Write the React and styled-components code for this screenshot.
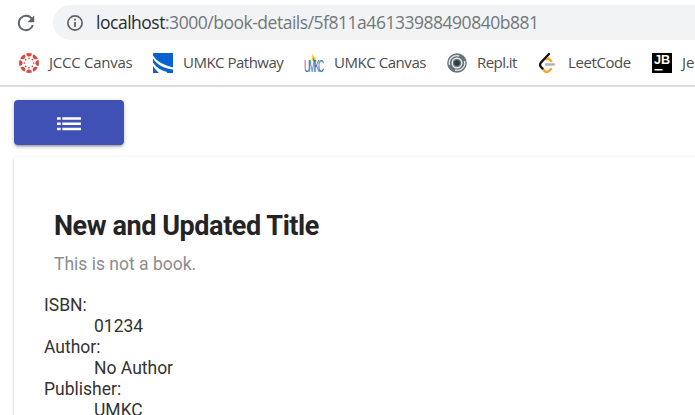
import React from 'react';
import styled, { createGlobalStyle } from 'styled-components';

const GlobalStyle = createGlobalStyle`
  * { box-sizing: border-box; }
  html, body { margin: 0; background: #fff; overflow: hidden; }
`;

const Window = styled.div`
  width: 695px;
  height: 415px;
  overflow: hidden;
  background: #fff;
  font-family: Roboto, sans-serif;
`;

const Toolbar = styled.div`
  display: flex;
  align-items: center;
  height: 45px;
  padding: 0 0 0 15px;
`;

const AddressBar = styled.div`
  flex: 1;
  display: flex;
  align-items: center;
  height: 35px;
  margin-left: 16px;
  padding-left: 13px;
  border-radius: 18px 0 0 18px;
  background: #f1f3f4;
`;

const Url = styled.span`
  margin-left: 12px;
  padding-bottom: 1px;
  font: 17.5px/24px "Open Sans", sans-serif;
  letter-spacing: -0.48px;
  white-space: nowrap;
  color: #73777a;
`;

const Host = styled.span`
  color: #2b2c2f;
`;

const BookmarkBar = styled.nav`
  display: flex;
  align-items: center;
  height: 42px;
  padding: 0 0 5px 19px;
  border-bottom: 2px solid #dcdcdc;
  overflow: hidden;
`;

const Bookmark = styled.div`
  flex: none;
  display: flex;
  align-items: center;
  gap: 10px;
  width: ${(p) => p.$width}px;
  font: 15px/20px "Open Sans", sans-serif;
  letter-spacing: ${(p) => p.$spacing}px;
  white-space: nowrap;
  color: #4a4d50;

  svg { flex: none; }
`;

const BookmarkLabel = styled.span`
  padding-bottom: 2px;
`;

const Page = styled.main`
  padding: 13px 0 0 14px;
`;

const ListButton = styled.button`
  display: flex;
  align-items: center;
  justify-content: center;
  width: 110px;
  height: 45px;
  padding: 3px 0 0;
  border: 0;
  border-radius: 4px;
  background: #3f51b5;
  box-shadow: 0 3px 2px -2px rgba(0, 0, 0, 0.22), 0 2px 3px rgba(0, 0, 0, 0.16), 0 1px 6px rgba(0, 0, 0, 0.12);
`;

const Card = styled.section`
  height: 300px;
  margin-top: 12px;
  padding: 51px 30px 0;
  border-radius: 4px 0 0 4px;
  background: #fff;
  box-shadow: 0 2px 2px -1px rgba(0, 0, 0, 0.2), 0 1px 2px rgba(0, 0, 0, 0.14), 0 1px 4px rgba(0, 0, 0, 0.12);
`;

const Title = styled.h2`
  margin: 0 0 0 10px;
  font-size: 27px;
  line-height: 36px;
  font-weight: 700;
  letter-spacing: -0.43px;
  color: #242424;
`;

const Subtitle = styled.p`
  margin: 9px 0 0 10px;
  font-size: 17.5px;
  line-height: 22px;
  color: #8c8c8c;
`;

const Details = styled.dl`
  margin: 20px 0 0;
  font-size: 17.5px;
  line-height: 21px;
  color: #333;
`;

const Value = styled.dd`
  margin: 0 0 0 50px;
`;

const ReloadIcon = () => (
  <svg width="22" height="22" viewBox="0 0 22 22">
    <path d="M17 7A7.200 7.200 0 1 0 17.900 13" fill="none" stroke="#5f6368" strokeWidth="1.900" />
    <path d="M19.200 3.500v6.800h-6.800z" fill="#5f6368" />
  </svg>
);

const InfoIcon = () => (
  <svg width="18" height="18" viewBox="0 0 18 18">
    <circle cx="9" cy="9" r="7.1" fill="none" stroke="#5f6368" strokeWidth="1.7" />
    <path d="M8.1 4.800h1.800v1.800H8.100zM8.100 8h1.800v5H8.100z" fill="#5f6368" />
  </svg>
);

const spokes = [0, 45, 90, 135, 180, 225, 270, 315];

const CanvasIcon = () => (
  <svg width="20" height="20" viewBox="0 0 20 20" fill="#d64b40">
    {spokes.map((angle) => (
      <g key={angle} transform={`rotate(${angle} 10 10)`}>
        <path d="M7 0.5Q10-.4 13 .5Q12.500 3.600 10 3.600T7 .5z" />
        <circle cx="10" cy="5.300" r="0.850" />
      </g>
    ))}
  </svg>
);

const PathwayIcon = () => (
  <svg width="20" height="20" viewBox="0 0 20 20">
    <path d="M0 0h20v20H0z" fill="#0b62ce" />
    <path d="M0 2.500C4 9 11 12 20 14.500v2C11 15.500 4 12 0 5.500z" fill="#fff" />
    <path d="M0 9.500c3 5 8 7.500 14 9.500v1H6C4 18 2 16 0 13z" fill="#fff" />
  </svg>
);

const UmkcIcon = () => (
  <svg width="20" height="20" viewBox="0 0 20 20">
    <path d="M7.500 7.500L8 1l3.500 4 1.500 4z" fill="#f5cf43" />
    <path d="M9 8.500V4l3 5z" fill="#5792b5" />
    <g transform="scale(0.5 1)">
      <text x="0" y="19" textLength="40" lengthAdjust="spacing" fontFamily="Liberation Sans" fontSize="17" fill="#2871bd">UMKC</text>
    </g>
  </svg>
);

const ReplitIcon = () => (
  <svg width="20" height="20" viewBox="0 0 20 20" fill="none">
    <circle cx="10" cy="10" r="9.800" fill="#66747b" />
    <path d="M2.500 12C1 6 6 1.500 12 3M17.500 8c1.500 6-3.500 10.500-9.500 9" stroke="#e4e8e9" strokeWidth="1.300" />
    <circle cx="10" cy="10" r="4.800" stroke="#e4e8e9" strokeWidth="1.400" />
    <circle cx="10" cy="10" r="2.700" fill="#30383c" />
  </svg>
);

const LeetCodeIcon = () => (
  <svg width="20" height="20" viewBox="0 0 20 20" fill="none" strokeWidth="2.300" strokeLinecap="round">
    <path d="M8 6.300l2-1 3.200 2.700M4 15l2.500 3q2.500 2 4.500 0l2-2" stroke="#f8a51b" />
    <path d="M11 1L3 9.500Q1.200 12 3 14l1.500 1.500" stroke="#111" />
    <path d="M8 11.500h8" stroke="#b3b3b3" />
  </svg>
);

const JetBrainsIcon = () => (
  <svg width="20" height="20" viewBox="0 0 20 20">
    <path d="M0 0h20v20H0z" fill="#000" />
    <text x="2" y="11" textLength="16" lengthAdjust="spacingAndGlyphs" fontFamily="Liberation Sans" fontWeight="700" fontSize="12" fill="#fff">JB</text>
    <path d="M2.500 16h8v1.500h-8z" fill="#fff" />
  </svg>
);

const ListIcon = () => (
  <svg width="24" height="14" viewBox="0 0 24 14" fill="#fff">
    <path d="M0 .3h3.700v2.500H0zM5.300 .3H24v2.500H5.300zM0 5.500h3.700v2.500H0zM5.300 5.500H24v2.500H5.300zM0 10.700h3.700v2.500H0zM5.300 10.700H24v2.500H5.300z" />
  </svg>
);

const bookmarks = [
  { label: 'JCCC Canvas', Icon: CanvasIcon, width: 134, spacing: -0.25 },
  { label: 'UMKC Pathway', Icon: PathwayIcon, width: 151, spacing: -0.5 },
  { label: 'UMKC Canvas', Icon: UmkcIcon, width: 143, spacing: -0.45 },
  { label: 'Repl.it', Icon: ReplitIcon, width: 91, spacing: -0.55 },
  { label: 'LeetCode', Icon: LeetCodeIcon, width: 114, spacing: -0.4 },
  { label: 'Je', Icon: JetBrainsIcon, width: 110, spacing: -0.1 },
];

const details = [
  ['ISBN:', '01234'],
  ['Author:', 'No Author'],
  ['Publisher:', 'UMKC'],
];

export default function App() {
  return (
    <Window>
      <GlobalStyle />
      <Toolbar>
        <ReloadIcon />
        <AddressBar>
          <InfoIcon />
          <Url><Host>localhost</Host>:3000/book-details/5f811a46133988490840b881</Url>
        </AddressBar>
      </Toolbar>
      <BookmarkBar>
        {bookmarks.map(({ label, Icon, width, spacing }) => (
          <Bookmark key={label} $width={width} $spacing={spacing}>
            <Icon />
            <BookmarkLabel>{label}</BookmarkLabel>
          </Bookmark>
        ))}
      </BookmarkBar>
      <Page>
        <ListButton aria-label="Book list"><ListIcon /></ListButton>
        <Card>
          <Title>New and Updated Title</Title>
          <Subtitle>This is not a book.</Subtitle>
          <Details>
            {details.map(([term, value]) => (
              <React.Fragment key={term}>
                <dt>{term}</dt>
                <Value>{value}</Value>
              </React.Fragment>
            ))}
          </Details>
        </Card>
      </Page>
    </Window>
  );
}
